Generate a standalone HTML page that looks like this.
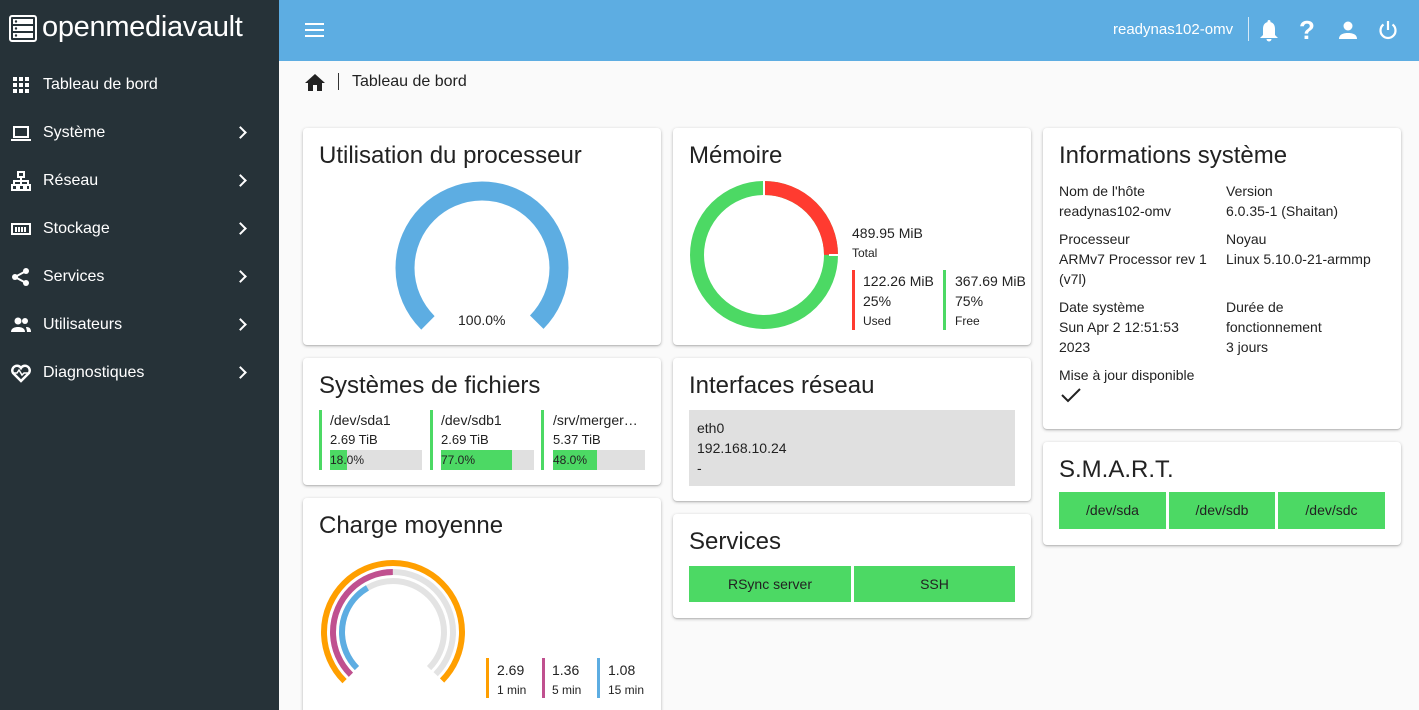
<!DOCTYPE html>
<html><head><meta charset="utf-8"><style>
*{box-sizing:border-box;margin:0;padding:0}
html,body{width:1419px;height:710px;overflow:hidden}
body{background:#fafafa;font-family:"Liberation Sans",sans-serif;color:#222;position:relative}
.side{position:absolute;left:0;top:0;width:279px;height:710px;background:#263238;color:#fff}
.logo{position:absolute;left:42px;top:11px;font-size:29px;color:#fff;letter-spacing:-0.3px}
.nav{position:absolute;left:0;width:279px;height:48px;font-size:16px;display:flex;align-items:center}
.nav .t{position:absolute;left:43px}
.nav .ic{position:absolute;left:11px;width:20px;height:20px}
.nav .ch{position:absolute;left:236px;top:19px;width:9px;height:9px;border-right:2px solid #fff;border-top:2px solid #fff;transform:rotate(45deg)}
.top{position:absolute;left:279px;top:0;width:1140px;height:61px;background:#5dade2;color:#fff}
.card{position:absolute;background:#fff;border-radius:4px;box-shadow:0 1px 3px rgba(0,0,0,.25),0 1px 1px rgba(0,0,0,.1);overflow:hidden}
.card h2{position:absolute;left:16px;top:14px;font-size:24px;font-weight:normal;color:#222}
.s{font-size:14px;position:absolute}
.g{background:#4cd964}
</style></head><body>
<div class="side">
 <svg style="position:absolute;left:9px;top:15px" width="28" height="27" viewBox="0 0 28 27"><rect x="1" y="1" width="26" height="25" rx="2" fill="none" stroke="#fff" stroke-width="2"/><rect x="4" y="4" width="20" height="5" fill="#fff"/><rect x="4" y="11" width="20" height="5" fill="#fff"/><rect x="4" y="18" width="20" height="5" fill="#fff"/><circle cx="7" cy="6.5" r="1.2" fill="#263238"/><circle cx="7" cy="13.5" r="1.2" fill="#263238"/><circle cx="7" cy="20.5" r="1.2" fill="#263238"/></svg>
 <div class="logo">openmediavault</div>
 <div class="nav" style="top:61px"><svg class="ic" viewBox="0 0 20 20" fill="#fff"><rect x="2" y="2" width="4" height="4"/><rect x="8" y="2" width="4" height="4"/><rect x="14" y="2" width="4" height="4"/><rect x="2" y="8" width="4" height="4"/><rect x="8" y="8" width="4" height="4"/><rect x="14" y="8" width="4" height="4"/><rect x="2" y="14" width="4" height="4"/><rect x="8" y="14" width="4" height="4"/><rect x="14" y="14" width="4" height="4"/></svg><span class="t">Tableau de bord</span></div>
 <div class="nav" style="top:109px"><svg class="ic" viewBox="0 0 20 20" fill="none" stroke="#fff" stroke-width="2"><rect x="3" y="4" width="14" height="10"/><path d="M0 17h20"/></svg><span class="t">Système</span><i class="ch"></i></div>
 <div class="nav" style="top:157px"><svg class="ic" viewBox="0 0 20 20" fill="none" stroke="#fff" stroke-width="2"><rect x="7" y="1" width="6" height="5"/><rect x="1" y="14" width="5" height="5"/><rect x="8" y="14" width="5" height="5"/><rect x="15" y="14" width="4" height="5"/><path d="M10 6v8M3 14v-4h14v4"/></svg><span class="t">Réseau</span><i class="ch"></i></div>
 <div class="nav" style="top:205px"><svg class="ic" viewBox="0 0 20 20" fill="none" stroke="#fff" stroke-width="2"><rect x="1" y="5" width="18" height="10"/><path d="M5 8v5M8 8v5M11 8v5M14 8v5"/></svg><span class="t">Stockage</span><i class="ch"></i></div>
 <div class="nav" style="top:253px"><svg class="ic" viewBox="0 0 20 20" fill="#fff"><circle cx="15" cy="4" r="3"/><circle cx="4" cy="10" r="3"/><circle cx="15" cy="16" r="3"/><path d="M15 4L4 10L15 16" stroke="#fff" stroke-width="2" fill="none"/></svg><span class="t">Services</span><i class="ch"></i></div>
 <div class="nav" style="top:301px"><svg class="ic" viewBox="0 0 20 20" fill="#fff"><circle cx="7" cy="6" r="3.5"/><circle cx="14" cy="6" r="3"/><path d="M0 17c0-4 4-5 7-5s7 1 7 5z"/><path d="M15 12c3 0 5 1 5 5h-4c0-2-1-4-1-5z"/></svg><span class="t">Utilisateurs</span><i class="ch"></i></div>
 <div class="nav" style="top:349px"><svg class="ic" viewBox="0 0 20 20" fill="none" stroke="#fff" stroke-width="2.5"><path d="M10 18L2 10a4.5 4.5 0 0 1 8-5a4.5 4.5 0 0 1 8 5z"/><path d="M1 10h5l2-3 3 5 2-2h6" stroke-width="1.5"/></svg><span class="t">Diagnostiques</span><i class="ch"></i></div>
</div>
<div class="top">
 <div style="position:absolute;left:26px;top:23px;width:19px;height:14px;border-top:2px solid #fff;border-bottom:2px solid #fff"><div style="margin-top:4px;height:2px;background:#fff"></div></div>
 <div style="position:absolute;left:834px;top:21px;font-size:15px">readynas102-omv</div>
 <div style="position:absolute;left:969px;top:17px;width:1px;height:24px;background:#d6eaf8"></div>
 <svg style="position:absolute;left:980px;top:19px" width="20" height="24" viewBox="0 0 20 24" fill="#fff"><path d="M10 1c1 0 1.5.7 1.5 1.5v.6C15 4 16 7 16 10v6l3 3H1l3-3v-6c0-3 1-6 4.5-6.9v-.6C8.5 1.7 9 1 10 1z"/><path d="M7.5 20h5a2.5 2.5 0 0 1-5 0z"/></svg>
 <div style="position:absolute;left:1020px;top:15px;font-size:26px;font-weight:bold">?</div>
 <svg style="position:absolute;left:1059px;top:20px" width="20" height="20" viewBox="0 0 20 20" fill="#fff"><circle cx="10" cy="6" r="4.5"/><path d="M1 19c0-5 5-6 9-6s9 1 9 6z"/></svg>
 <svg style="position:absolute;left:1099px;top:20px" width="20" height="20" viewBox="0 0 20 20" fill="none" stroke="#fff" stroke-width="2.2"><path d="M10 1v9"/><path d="M5.5 4.5a7.5 7.5 0 1 0 9 0"/></svg>
</div>
<svg style="position:absolute;left:305px;top:73px" width="20" height="18" viewBox="0 0 20 18" fill="#222"><path d="M10 1L0 10h3v8h5v-6h4v6h5v-8h3z"/></svg>
<div style="position:absolute;left:338px;top:73px;width:1px;height:17px;background:#333"></div>
<div style="position:absolute;left:352px;top:73px;font-size:16px">Tableau de bord</div>

<div class="card" style="left:303px;top:128px;width:358px;height:217px"><h2>Utilisation du processeur</h2>
 <svg style="position:absolute;left:0;top:0" width="358" height="217"><circle cx="179" cy="140" r="77" fill="none" stroke="#5dade2" stroke-width="19" pathLength="360" stroke-dasharray="270 90" transform="rotate(135 179 140)"/></svg>
 <div class="s" style="left:155px;top:184px">100.0%</div></div>

<div class="card" style="left:303px;top:358px;width:358px;height:127px"><h2>Systèmes de fichiers</h2>
 <div style="position:absolute;left:16px;top:52px;width:3px;height:60px" class="g"></div>
 <div style="position:absolute;left:127px;top:52px;width:3px;height:60px" class="g"></div>
 <div style="position:absolute;left:238px;top:52px;width:3px;height:60px" class="g"></div>
 <div class="s" style="left:27px;top:54px">/dev/sda1</div><div class="s" style="left:27px;top:74px;font-size:13px">2.69 TiB</div>
 <div style="position:absolute;left:27px;top:92px;width:92px;height:20px;background:#e0e0e0"><div class="g" style="width:17px;height:20px"></div><span style="position:absolute;left:0;top:3px;font-size:12px">18.0%</span></div>
 <div class="s" style="left:138px;top:54px">/dev/sdb1</div><div class="s" style="left:138px;top:74px;font-size:13px">2.69 TiB</div>
 <div style="position:absolute;left:138px;top:92px;width:93px;height:20px;background:#e0e0e0"><div class="g" style="width:71px;height:20px"></div><span style="position:absolute;left:0;top:3px;font-size:12px">77.0%</span></div>
 <div class="s" style="left:250px;top:54px">/srv/merger…</div><div class="s" style="left:250px;top:74px;font-size:13px">5.37 TiB</div>
 <div style="position:absolute;left:250px;top:92px;width:92px;height:20px;background:#e0e0e0"><div class="g" style="width:44px;height:20px"></div><span style="position:absolute;left:0;top:3px;font-size:12px">48.0%</span></div>
</div>

<div class="card" style="left:303px;top:498px;width:358px;height:230px"><h2>Charge moyenne</h2>
 <svg style="position:absolute;left:0;top:0" width="358" height="230">
  <circle cx="90" cy="134" r="69" fill="none" stroke="#ff9f00" stroke-width="6" pathLength="360" stroke-dasharray="270 90" transform="rotate(135 90 134)"/>
  <circle cx="90" cy="134" r="60" fill="none" stroke="#e3e3e3" stroke-width="6" pathLength="360" stroke-dasharray="270 90" transform="rotate(135 90 134)"/>
  <circle cx="90" cy="134" r="60" fill="none" stroke="#c0508f" stroke-width="6" pathLength="360" stroke-dasharray="135 225" transform="rotate(135 90 134)"/>
  <circle cx="90" cy="134" r="51" fill="none" stroke="#e3e3e3" stroke-width="6" pathLength="360" stroke-dasharray="270 90" transform="rotate(135 90 134)"/>
  <circle cx="90" cy="134" r="51" fill="none" stroke="#5dade2" stroke-width="6" pathLength="360" stroke-dasharray="105 255" transform="rotate(135 90 134)"/>
 </svg>
 <div style="position:absolute;left:183px;top:160px;width:3px;height:40px;background:#ff9f00"></div>
 <div style="position:absolute;left:239px;top:160px;width:3px;height:40px;background:#c0508f"></div>
 <div style="position:absolute;left:294px;top:160px;width:3px;height:40px;background:#5dade2"></div>
 <div class="s" style="left:194px;top:164px">2.69</div><div class="s" style="left:194px;top:185px;font-size:12px">1 min</div>
 <div class="s" style="left:249px;top:164px">1.36</div><div class="s" style="left:249px;top:185px;font-size:12px">5 min</div>
 <div class="s" style="left:305px;top:164px">1.08</div><div class="s" style="left:305px;top:185px;font-size:12px">15 min</div>
</div>

<div class="card" style="left:673px;top:128px;width:358px;height:217px"><h2>Mémoire</h2>
 <svg style="position:absolute;left:0;top:0" width="358" height="217">
  <circle cx="91" cy="127" r="67" fill="none" stroke="#4cd964" stroke-width="14"/>
  <circle cx="91" cy="127" r="67" fill="none" stroke="#ff3b30" stroke-width="14" pathLength="360" stroke-dasharray="90 270" transform="rotate(-90 91 127)"/>
  <path d="M91 53v15M156 127h15" stroke="#fff" stroke-width="2"/>
 </svg>
 <div class="s" style="left:179px;top:97px">489.95 MiB</div><div class="s" style="left:179px;top:118px;font-size:12px">Total</div>
 <div style="position:absolute;left:179px;top:142px;width:3px;height:60px;background:#ff3b30"></div>
 <div style="position:absolute;left:270px;top:142px;width:3px;height:60px" class="g"></div>
 <div class="s" style="left:190px;top:145px">122.26 MiB</div><div class="s" style="left:190px;top:165px">25%</div><div class="s" style="left:190px;top:186px;font-size:12px">Used</div>
 <div class="s" style="left:282px;top:145px">367.69 MiB</div><div class="s" style="left:282px;top:165px">75%</div><div class="s" style="left:282px;top:186px;font-size:12px">Free</div>
</div>

<div class="card" style="left:673px;top:358px;width:358px;height:143px"><h2>Interfaces réseau</h2>
 <div style="position:absolute;left:16px;top:52px;width:326px;height:76px;background:#e0e0e0"></div>
 <div class="s" style="left:24px;top:62px">eth0</div><div class="s" style="left:24px;top:82px">192.168.10.24</div><div class="s" style="left:24px;top:102px">-</div>
</div>

<div class="card" style="left:673px;top:514px;width:358px;height:104px"><h2>Services</h2>
 <div class="g s" style="left:16px;top:52px;width:162px;height:36px;text-align:center;line-height:36px">RSync server</div>
 <div class="g s" style="left:181px;top:52px;width:161px;height:36px;text-align:center;line-height:36px">SSH</div>
</div>

<div class="card" style="left:1043px;top:128px;width:358px;height:301px"><h2>Informations système</h2>
 <div class="s" style="left:16px;top:53px;line-height:20px">Nom de l'hôte<br>readynas102-omv</div>
 <div class="s" style="left:183px;top:53px;line-height:20px">Version<br>6.0.35-1 (Shaitan)</div>
 <div class="s" style="left:16px;top:101px;line-height:20px">Processeur<br>ARMv7 Processor rev 1<br>(v7l)</div>
 <div class="s" style="left:183px;top:101px;line-height:20px">Noyau<br>Linux 5.10.0-21-armmp</div>
 <div class="s" style="left:16px;top:169px;line-height:20px">Date système<br>Sun Apr 2 12:51:53<br>2023</div>
 <div class="s" style="left:183px;top:169px;line-height:20px">Durée de<br>fonctionnement<br>3 jours</div>
 <div class="s" style="left:16px;top:237px;line-height:20px">Mise à jour disponible</div>
 <svg style="position:absolute;left:18px;top:259px" width="20" height="16" viewBox="0 0 20 16" fill="none" stroke="#222" stroke-width="2"><path d="M1 8l6 6L19 2"/></svg>
</div>

<div class="card" style="left:1043px;top:442px;width:358px;height:103px"><h2>S.M.A.R.T.</h2>
 <div class="g s" style="left:16px;top:50px;width:107px;height:37px;text-align:center;line-height:37px">/dev/sda</div>
 <div class="g s" style="left:126px;top:50px;width:106px;height:37px;text-align:center;line-height:37px">/dev/sdb</div>
 <div class="g s" style="left:235px;top:50px;width:107px;height:37px;text-align:center;line-height:37px">/dev/sdc</div>
</div>
</body></html>
